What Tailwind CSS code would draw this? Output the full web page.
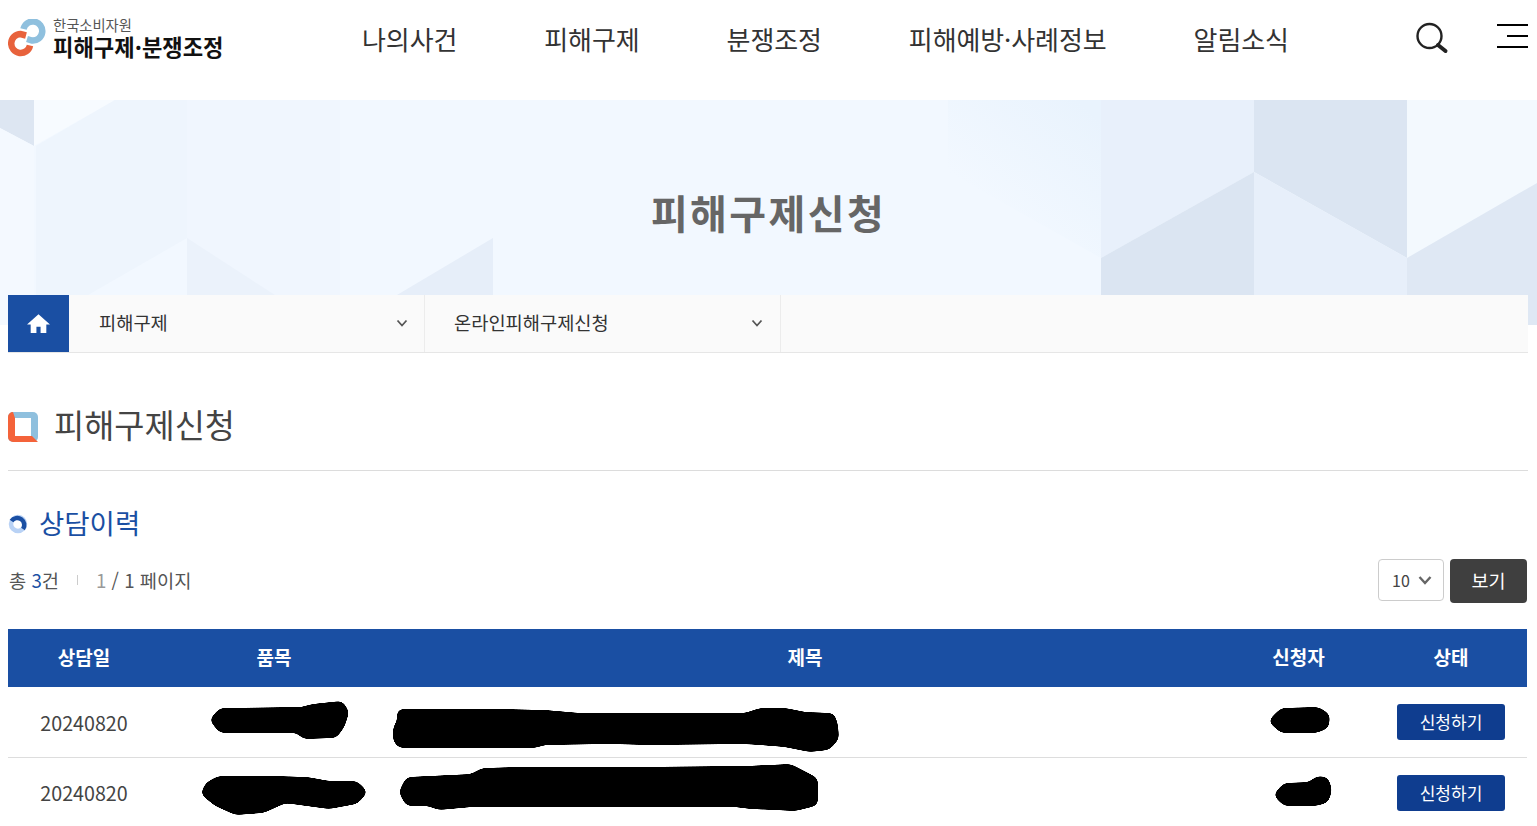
<!DOCTYPE html>
<html lang="ko">
<head>
    <meta charset="UTF-8">
    <meta name="viewport" content="width=device-width, initial-scale=1.0">
    <title>피해구제신청</title>
    <script src="https://cdn.jsdelivr.net/npm/@tailwindcss/browser@4"></script>
</head>
<body class="bg-white text-[#444] font-['Noto_Sans_CJK_KR','Noto_Sans',sans-serif] overflow-hidden h-[826px]">
    <!-- Header -->
    <header class="flex h-[100px] bg-white pl-2">
        <a class="flex w-[354px] shrink-0 items-start pt-[17px]">
            <svg class="mt-[2px] h-[38px] w-[38px] shrink-0" viewBox="8 19 38 38" fill="none">
                <path d="M23.5 29 A9.5 9.5 0 1 1 32 40.5 L27 39" stroke="#8fc0de" stroke-width="6.5"/>
                <path d="M30 45.5 A9.5 9.5 0 1 1 20.5 34 L26 35.5" stroke="#e8623c" stroke-width="6.5"/>
            </svg>
            <div class="ml-[7px] flex flex-col">
                <span class="text-[14.3px] leading-[16px] text-[#555]">한국소비자원</span>
                <span class="text-[22.2px] leading-[26px] font-bold text-[#111] whitespace-nowrap">피해구제·분쟁조정</span>
            </div>
        </a>
        <nav class="flex h-[77px] items-center gap-[87px] text-[26px] tracking-[-0.1px] text-[#333] whitespace-nowrap">
            <a>나의사건</a>
            <a>피해구제</a>
            <a>분쟁조정</a>
            <a>피해예방·사례정보</a>
            <a>알림소식</a>
        </nav>
        <div class="ml-auto flex h-[74px] items-center gap-[48px] pr-[9px]">
            <svg class="h-[34px] w-[34px]" viewBox="1415 19 34 34" fill="none">
                <circle cx="1429.5" cy="35" r="12" stroke="#222" stroke-width="2.4"/>
                <path d="M1438 44 L1445.5 50" stroke="#222" stroke-width="4" stroke-linecap="round"/>
            </svg>
            <div class="flex w-[31px] flex-col items-end gap-[9px] mt-[-2px]">
                <span class="h-[2px] w-full bg-black"></span>
                <span class="h-[2px] w-[21px] bg-black"></span>
                <span class="h-[2px] w-full bg-black"></span>
            </div>
        </div>
    </header>

    <!-- Visual banner -->
    <section class="relative flex h-[225px] justify-center overflow-hidden bg-[#f2f8ff]">
        <svg class="absolute inset-0 h-full w-full" viewBox="0 100 1537 225" preserveAspectRatio="none">
            <defs>
                <linearGradient id="fade" gradientUnits="userSpaceOnUse" x1="1101" y1="120" x2="1010" y2="225">
                    <stop offset="0" stop-color="#e9f3fd"/>
                    <stop offset="1" stop-color="#f2f8ff"/>
                </linearGradient>
            </defs>
            <polygon points="34,100 115,100 34,146" fill="#f7fbff"/>
            <polygon points="0,100 34,100 34,146 0,128" fill="#dde6f2"/>
            <polygon points="36,146 115,100 187,100 187,238 88,295 36,295" fill="#eef5fd"/>
            <polygon points="0,128 34,146 34,325 0,325" fill="#f4f9ff"/>
            <polygon points="187,100 340,100 340,325 187,325" fill="#f0f6fe"/>
            <polygon points="187,238 275,295 187,295" fill="#ebf2fb"/>
            <polygon points="493,238 493,295 397,295" fill="#e6eef9"/>
            <polygon points="948,100 1101,100 1101,258 948,172" fill="url(#fade)"/>
            <polygon points="1101,100 1254,100 1254,172 1101,258" fill="#e8f0fb"/>
            <polygon points="1254,100 1407,100 1407,258 1254,172" fill="#dbe5f2"/>
            <polygon points="1101,258 1254,172 1254,325 1101,325" fill="#dbe5f2"/>
            <polygon points="1254,172 1407,258 1407,325 1254,325" fill="#e7effa"/>
            <polygon points="1407,100 1537,100 1537,183 1407,258" fill="#f3f9fe"/>
            <polygon points="1407,258 1537,183 1537,325 1407,325" fill="#dfe8f4"/>
        </svg>
        <h2 class="relative mt-[84px] text-[40px] leading-[56px] font-bold tracking-[2.4px] text-[#666]">피해구제신청</h2>
    </section>

    <main class="relative mx-2 -mt-[30px] w-[1520px]">
        <!-- Breadcrumb -->
        <div class="flex h-[58px] border-b border-[#e6e6e6] bg-[#fafafa] text-[18.7px] text-[#333]">
            <a class="flex h-[57px] w-[61px] items-center justify-center bg-[#1a4fa3]">
                <svg class="h-[25px] w-[25px]" viewBox="0 0 24 24" fill="#fff"><path d="M12 3 L1 13 L4.5 13 L4.5 21 L10 21 L10 15 L14 15 L14 21 L19.5 21 L19.5 13 L23 13 Z"/></svg>
            </a>
            <div class="flex w-[356px] items-center justify-between border-r border-[#ececec] pr-[16px] pb-[2px] pl-[30px]">
                <span>피해구제</span>
                <svg class="h-[10px] w-[12px]" viewBox="0 0 12 10" fill="none"><path d="M1.5 2.5 L6 7.5 L10.5 2.5" stroke="#555" stroke-width="1.8"/></svg>
            </div>
            <div class="flex w-[356px] items-center justify-between border-r border-[#ececec] pr-[17px] pb-[2px] pl-[29px]">
                <span>온라인피해구제신청</span>
                <svg class="h-[10px] w-[12px]" viewBox="0 0 12 10" fill="none"><path d="M1.5 2.5 L6 7.5 L10.5 2.5" stroke="#555" stroke-width="1.8"/></svg>
            </div>
        </div>

        <!-- Page title -->
        <div class="mt-[50px] flex h-[68px] items-start border-b border-[#dcdcdc]">
            <svg class="mt-[9px] h-[30px] w-[30px]" viewBox="0 0 30 30">
                <rect width="30" height="30" rx="5" fill="#8fc0de"/>
                <path d="M5 0 L7 6 L7 24 L24 24 L30 30 L5 30 A5 5 0 0 1 0 25 L0 5 A5 5 0 0 1 5 0 Z" fill="#f4633a"/>
                <rect x="7" y="6" width="16" height="18" fill="#fff"/>
            </svg>
            <h3 class="ml-4 -translate-y-[2px] text-[32.8px] leading-[46px] text-[#444] whitespace-nowrap">피해구제신청</h3>
        </div>

        <!-- Sub title -->
        <div class="mt-[33px] flex h-[40px] items-center">
            <svg class="h-[20px] w-[20px]" viewBox="0 0 20 20" fill="none">
                <circle cx="10" cy="10" r="7" stroke="#b9d2f5" stroke-width="4.5"/>
                <path d="M3.5 7 A7 7 0 0 1 15 15" stroke="#1a4fa3" stroke-width="4.5"/>
            </svg>
            <h4 class="ml-[11px] mb-[3px] text-[27.5px] text-[#1a4fa3]">상담이력</h4>
        </div>

        <!-- Count and page size -->
        <div class="mt-[15px] flex h-[44px] items-start justify-between">
            <p class="mt-[9px] flex items-center pl-px text-[18.7px] leading-[24px] text-[#555]">
                <span>총 <span class="text-[#1a4fa3]">3</span>건</span>
                <span class="mx-[18px] h-[10px] w-px bg-[#ccc]"></span>
                <span><span class="text-[#999]">1</span> / 1 페이지</span>
            </p>
            <div class="flex gap-[6px] pr-px">
                <div class="flex h-[42px] w-[66px] items-center justify-between rounded border border-[#ccc] bg-white pr-[11px] pl-[13px] text-[16px] text-[#444]">
                    <span>10</span>
                    <svg class="h-[10px] w-[14px]" viewBox="0 0 14 10" fill="none"><path d="M1.5 2 L7 8 L12.5 2" stroke="#666" stroke-width="2.4"/></svg>
                </div>
                <button class="h-[44px] w-[77px] rounded bg-[#3f3f3f] text-[18.5px] text-white">보기</button>
            </div>
        </div>

        <!-- Table -->
        <div class="relative mt-[26px] w-[1519px]">
            <table class="w-full table-fixed border-collapse text-center">
                <colgroup>
                    <col class="w-[152px]"><col class="w-[228px]"><col class="w-[834px]"><col class="w-[153px]"><col class="w-[152px]">
                </colgroup>
                <thead class="bg-[#1a4fa3] text-[19px] font-bold text-white">
                    <tr class="h-[58px]">
                        <th class="pb-[2px]">상담일</th><th class="pb-[2px]">품목</th><th class="pb-[2px]">제목</th><th class="pb-[2px]">신청자</th><th class="pb-[2px]">상태</th>
                    </tr>
                </thead>
                <tbody class="text-[19.7px] text-[#444]">
                    <tr class="h-[70px] border-b border-[#dddddd]">
                        <td class="pt-[2px]">20240820</td><td></td><td></td><td></td>
                        <td><button class="h-[36px] w-[108px] rounded-[3px] bg-[#0f3d8f] text-[17px] text-white">신청하기</button></td>
                    </tr>
                    <tr class="h-[71px]">
                        <td>20240820</td><td></td><td></td><td></td>
                        <td><button class="h-[36px] w-[108px] rounded-[3px] bg-[#0f3d8f] text-[17px] text-white">신청하기</button></td>
                    </tr>
                </tbody>
            </table>
            <!-- marker scribbles over the hidden cells -->
            <svg class="absolute top-0 left-0 h-[197px] w-[1519px]" viewBox="8 629 1519 197" fill="#000" stroke="#000" stroke-width="6" stroke-linejoin="round">
                <defs>
                    <filter id="marker">
                        <feGaussianBlur stdDeviation="3"/>
                        <feComponentTransfer><feFuncA type="linear" slope="20" intercept="-9.5"/></feComponentTransfer>
                    </filter>
                </defs>
                <g filter="url(#marker)">
                    <polygon points="221,711 302,710 313,707 341,704 346,712 342,725 335,735 304,736 298,730 221,730 213,720"/>
                    <polygon points="400,712 500,712 545,713 580,716 745,716 760,711 785,711 805,715 832,716 835,725 836,738 828,747 810,749 785,744 745,741 650,742 610,741 545,742 535,745 400,745 396,740 396,728 400,722"/>
                    <polygon points="1282,711 1318,710 1327,716 1326,726 1316,730 1282,730 1272,721"/>
                    <polygon points="219,779 274,779 307,780 329,784 356,784 364,792 356,801 329,806 285,800 263,810 236,812 216,803 204,793 208,785"/>
                    <polygon points="408,780 472,777 483,771 521,770 631,770 746,769 790,767 815,780 815,803 795,808 751,806 735,804 472,804 439,807 428,803 408,803 402,792"/>
                    <polygon points="1285,786 1310,785 1318,779 1326,780 1329,790 1326,800 1315,803 1285,803 1277,795"/>
                </g>
            </svg>
        </div>
    </main>
</body>
</html>
